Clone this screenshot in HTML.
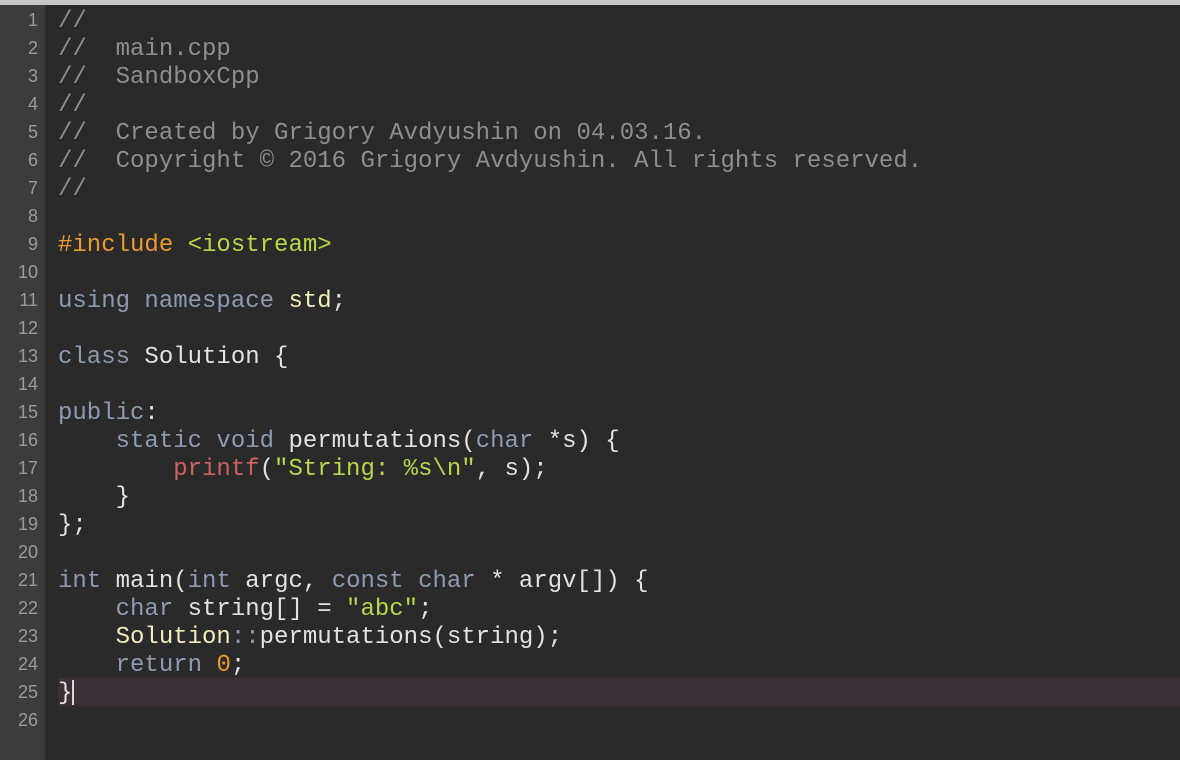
<!DOCTYPE html>
<html><head><style>
body{margin:0;width:1180px;height:760px;background:#2a2a2a;overflow:hidden;position:relative;font-family:"Liberation Mono",monospace;}
.top{position:absolute;left:0;top:0;width:1180px;height:5px;background:#c6c6c6}
.gut{position:absolute;left:0;top:5px;width:44px;height:755px;background:#3c3c3c;border-right:2px solid #323232}
.nums{position:absolute;left:0;top:6px;width:38px;text-align:right;font-family:"Liberation Sans",sans-serif;font-size:18px;color:#9a9a9a;line-height:28px}
.code{position:absolute;left:58px;top:8px;font-size:24px;line-height:28px;color:#e2e2e2;white-space:pre}
.hl{position:absolute;left:58px;top:678px;width:1122px;height:28px;background:#3b2f38}
.cur{position:absolute;left:72px;top:680px;width:2px;height:25px;background:#d8d8d8}
.c{color:#8e8e8e}.k{color:#8c9bb3}.y{color:#f3ebbb}.s{color:#b7d84a}.o{color:#eb9a2d}.r{color:#cf6160}
</style></head><body>
<div class="top"></div><div class="gut"></div>
<div class="hl"></div><div class="cur"></div>
<div class="nums">1<br>2<br>3<br>4<br>5<br>6<br>7<br>8<br>9<br>10<br>11<br>12<br>13<br>14<br>15<br>16<br>17<br>18<br>19<br>20<br>21<br>22<br>23<br>24<br>25<br>26</div>
<div class="code"><span class="c">//
//  main.cpp
//  SandboxCpp
//
//  Created by Grigory Avdyushin on 04.03.16.
//  Copyright © 2016 Grigory Avdyushin. All rights reserved.
//</span>

<span class="o">#include</span> <span class="s">&lt;iostream&gt;</span>

<span class="k">using namespace</span> <span class="y">std</span>;

<span class="k">class</span> Solution {

<span class="k">public</span>:
    <span class="k">static void</span> permutations(<span class="k">char</span> *s) {
        <span class="r">printf</span>(<span class="s">"String: %s\n"</span>, s);
    }
};

<span class="k">int</span> main(<span class="k">int</span> argc, <span class="k">const char</span> * argv[]) {
    <span class="k">char</span> string[] = <span class="s">"abc"</span>;
    <span class="y">Solution</span><span class="k">::</span>permutations(string);
    <span class="k">return</span> <span class="o">0</span>;
}
</div>
</body></html>
